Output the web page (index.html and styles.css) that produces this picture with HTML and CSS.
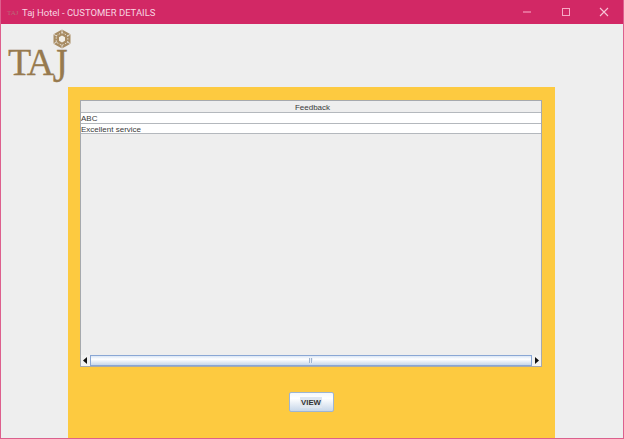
FILE: index.html
```html
<!DOCTYPE html>
<html lang="en">
<head>
<meta charset="utf-8">
<title>Taj Hotel - CUSTOMER DETAILS</title>
<link rel="stylesheet" href="styles.css">
</head>
<body>
<div class="window">
  <header class="titlebar">
    <div class="title-left">
      <span class="mini-logo">TAJ</span>
      <span class="title-text">Taj Hotel - CUSTOMER DETAILS</span>
    </div>
    <div class="controls">
      <svg class="ctl" width="38" height="24" viewBox="0 0 38 24"><path d="M14 12h8" stroke="#f59abb" stroke-width="1.200"/></svg>
      <svg class="ctl" width="38" height="24" viewBox="0 0 38 24"><rect x="15.500" y="8.500" width="7" height="7" fill="none" stroke="#f7a9c5" stroke-width="1"/></svg>
      <svg class="ctl" width="38" height="24" viewBox="0 0 38 24"><path d="M15 8l8 8M23 8l-8 8" stroke="#f7c3d6" stroke-width="1.100"/></svg>
    </div>
  </header>
  <main class="content">
    <div class="logo">
      <svg class="emblem" width="20" height="20" viewBox="0 0 20 20">
        <path d="M10 .5l8.500 4.700v9.600L10 19.500l-8.500-4.700V5.200z" fill="#a88c63"/>
        <path d="M10 3.500l5.800 3.200v6.600L10 16.500l-5.800-3.200V6.700z" fill="none" stroke="#e6dccb" stroke-width="1" stroke-dasharray="1.500 1.500"/>
        <path d="M10 6.500l3 1.700v3.600l-3 1.700-3-1.700V8.200z" fill="#f2eee6"/>
        <path d="M10 .5v4M1.500 5.200l3.500 2M18.500 5.200l-3.500 2M10 19.500v-4M1.500 14.800l3.500-2M18.500 14.800l-3.500-2" stroke="#eee" stroke-width=".8"/>
      </svg>
      <span class="logo-text">TA<span class="logo-j">J</span></span>
    </div>
    <section class="panel">
      <div class="table">
        <div class="thead">Feedback</div>
        <div class="row">ABC</div>
        <div class="row">Excellent service</div>
        <div class="viewport"></div>
        <div class="hscroll">
          <button class="arrow"><svg width="5" height="7" viewBox="0 0 5 7"><path d="M4 0v7L0 3.500z" fill="#111"/></svg></button>
          <div class="track"><span class="grip"></span></div>
          <button class="arrow"><svg width="5" height="7" viewBox="0 0 5 7"><path d="M1 0v7l4-3.500z" fill="#111"/></svg></button>
        </div>
      </div>
      <div class="actions"><button class="view"><span class="view-label">VIEW</span></button></div>
    </section>
  </main>
</div>
</body>
</html>
```
FILE: styles.css
```css
* { box-sizing: border-box; }
html, body { margin: 0; height: 100%; }
body { overflow: hidden; font-family: "Liberation Sans", Arial, sans-serif; }
.window {
  width: 624px; height: 439px;
  display: flex; flex-direction: column;
  border: 1px solid #dd5f8d; border-top: 0;
  background: #eeeeee;
  overflow: hidden;
}
.titlebar {
  height: 24px; flex: none;
  margin: 0 -1px;
  background: #d22865;
  display: flex; justify-content: space-between; align-items: center;
}
.title-left { display: flex; align-items: center; padding-left: 7px; gap: 3px; }
.mini-logo { font: 7px "Liberation Serif", serif; color: #b86a78; width: 12px; padding-top: 2px; }
.title-text { font: 9.500px Roboto, "Liberation Sans", sans-serif; color: #f7d5e1; }
.controls { display: flex; margin-right: 1px; }
.ctl { display: block; }
.content { flex: 1; display: flex; flex-direction: column; min-height: 0; }
.logo { height: 63px; flex: none; padding: 5px 0 0 7px; display: flex; flex-direction: column; align-items: flex-start; }
.emblem { margin-left: 44px; display: block; }
.logo-text {
  font: 38px/30px "Liberation Serif", serif;
  color: #977a4e; letter-spacing: -1.500px;
  -webkit-text-stroke: .3px #977a4e;
  margin-top: -2px;
}
.logo-j { display: inline-block; transform: scaleY(1.25); transform-origin: top; }
.panel {
  flex: 1; margin: 0 68px 0 67px;
  background: #fdca40;
  padding: 13px 13px 0 12px;
  display: flex; flex-direction: column;
}
.table {
  height: 267px; flex: none;
  background: #eeeeee;
  border: 1px solid #a6a9ad;
  display: flex; flex-direction: column;
  font-size: 8px; color: #3a3a3a;
}
.thead { height: 12px; flex: none; text-align: center; line-height: 14px; padding-left: 3px; background: #eeeeee; border-bottom: 1px solid #b4b8bd; }
.row { height: 10.500px; flex: none; background: #fff; line-height: 11px; border-bottom: 1px solid #b4b8bd; }
.viewport { flex: 1; }
.hscroll { height: 11px; flex: none; display: flex; background: #eee; }
.arrow { width: 9px; padding: 0; border: 0; background: #f2f2f2; display: flex; align-items: center; justify-content: center; }
.track {
  flex: 1; display: flex; align-items: center; justify-content: center;
  border: 1px solid #8aa7d4;
  background: linear-gradient(#dbe6f5, #ffffff 35%, #c8d8ec);
}
.grip { width: 4px; height: 5px; background: repeating-linear-gradient(90deg, #9fb4d2 0 1px, #e8eef7 1px 2px); }
.actions { flex: 1; display: flex; justify-content: center; align-items: flex-start; padding: 25px 0 0 0; }
.view {
  width: 45px; height: 20px; padding: 0;
  border: 1px solid #9db5d3; border-radius: 2px;
  background: linear-gradient(#f4f7fb, #ffffff 30%, #c6d6e9);
  font: bold 7.800px "Liberation Sans", Arial, sans-serif; color: #333;
  display: flex; align-items: center; justify-content: center;
}
.view-label { background: #dfe6ef; padding: 1px; line-height: 9px; }
```
